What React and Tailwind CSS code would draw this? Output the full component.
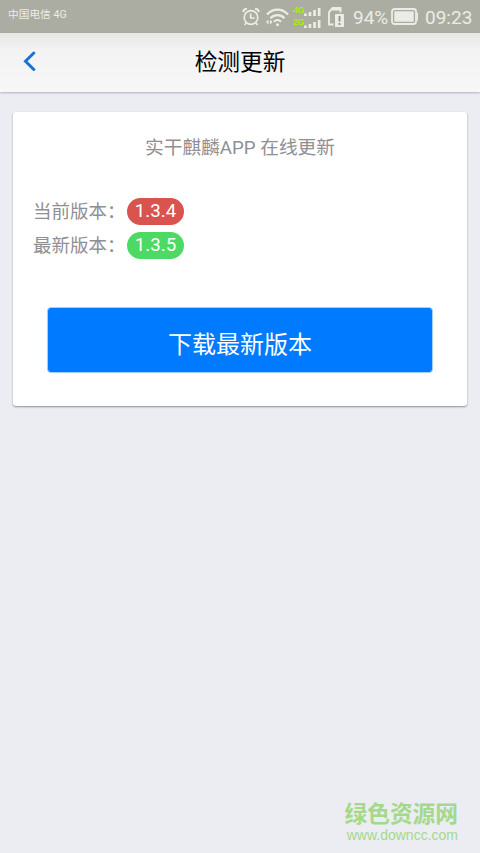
import React from "react";

function AlarmIcon() {
  return (
    <svg width="18" height="20" viewBox="0 0 18 20" fill="none" stroke="#ecece6" strokeWidth="1.700">
      <circle cx="9" cy="10.500" r="6.800" />
      <path d="M8.700 6.500v4.500h4" />
      <path d="M1.200 5c.3-2 1.800-3.300 3.800-3.300M16.800 5c-.3-2-1.800-3.300-3.800-3.300" strokeWidth="2" />
      <path d="M4 16l-1.500 2M14 16l1.500 2" />
    </svg>
  );
}

function WifiIcon() {
  return (
    <svg width="24" height="20" viewBox="0 0 24 20" fill="none" stroke="#ecece6" strokeWidth="2.200">
      <path d="M2 7.500C8 1 17 1 23 7.500" />
      <path d="M5.500 11.200c4-4 10-4 14 0" />
      <path d="M9 14.700c2-2 5-2 7 0" />
      <circle cx="12.500" cy="17.800" r="1.500" fill="#ecece6" stroke="none" />
      <path d="M3.500 12.500v5l-2.500-2.500zM5 12.500v5l2.500-2.500z" fill="#ecece6" stroke="none" />
    </svg>
  );
}

function SignalBars() {
  return (
    <svg width="17" height="8" viewBox="0 0 17 8" fill="#ecece6">
      <rect x="0" y="5.500" width="2.700" height="2.500" />
      <rect x="4.600" y="4" width="2.700" height="4" />
      <rect x="9.200" y="2" width="2.700" height="6" />
      <rect x="13.800" y="0" width="2.700" height="8" />
    </svg>
  );
}

function SimIcon() {
  return (
    <svg width="18" height="22" viewBox="0 0 18 22">
      <path d="M6.500 18.500H2V6l3.500-4H13.500v4.500" fill="none" stroke="#ecece6" strokeWidth="1.900" />
      <path d="M5 2h8.500v2.500H5z" fill="#ecece6" />
      <rect x="8" y="8" width="9" height="13" rx=".5" fill="#ecece6" />
      <path d="M12.500 10v5.500M12.500 17v2" stroke="#8f9187" strokeWidth="1.800" />
    </svg>
  );
}

function BatteryIcon() {
  return (
    <svg width="28" height="18" viewBox="0 0 28 18">
      <rect x="1" y="1" width="24" height="15" rx="2.500" fill="none" stroke="#ecece6" strokeWidth="1.800" />
      <rect x="3.300" y="3.300" width="19.400" height="10.400" fill="#ecece6" />
      <path d="M25.500 4.500H27v8h-1.500z" fill="#ecece6" />
    </svg>
  );
}

function SignalRow({ label }) {
  return (
    <div className="flex h-[10px] w-[28px] items-end">
      <span className="w-[11px] shrink-0 self-start font-['Liberation_Sans',sans-serif] text-[9px] font-bold leading-[8px] tracking-[-0.5px]">
        {label}
      </span>
      <SignalBars />
    </div>
  );
}

function StatusBar() {
  return (
    <div className="flex h-[33px] shrink-0 items-start bg-[#abada3] text-[#ecece6]">
      <span className="ml-2 mt-[7px] text-[10.700px] leading-4">中国电信 4G</span>
      <div className="ml-auto flex h-[33px] items-center pr-2">
        <AlarmIcon />
        <div className="ml-[5px] flex">
          <WifiIcon />
        </div>
        <div className="ml-1 flex flex-col gap-[2px] text-[#a9ea12]">
          <SignalRow label="4G" />
          <SignalRow label="2G" />
        </div>
        <div className="ml-1.5 flex">
          <SimIcon />
        </div>
        <span className="ml-2 w-[36px] whitespace-nowrap pt-0.5 text-[19px] leading-6">94%</span>
        <div className="ml-0.5 flex">
          <BatteryIcon />
        </div>
        <span className="ml-[6px] w-[47px] whitespace-nowrap pt-0.5 text-[19px] leading-6">09:23</span>
      </div>
    </div>
  );
}

function VersionRow({ label, version, color }) {
  return (
    <div className="flex h-[27px] items-center">
      <span className="w-[94px] whitespace-nowrap pt-0.5 text-[18.500px] leading-[27px]">{label}</span>
      <span
        className={`flex h-[27px] w-[57px] items-center justify-center rounded-full text-[18.700px] leading-[27px] text-white ${color}`}
      >
        {version}
      </span>
    </div>
  );
}

export default function App() {
  return (
    <div className="flex h-[853px] w-[480px] flex-col overflow-hidden bg-[#ecedf2] font-[Roboto,'Noto_Sans_CJK_SC',sans-serif]">
      <StatusBar />

      {/* Title bar */}
      <header className="z-10 grid h-[59px] shrink-0 grid-cols-[60px_1fr_60px] items-center bg-linear-to-b from-[#e6e6e6] via-[#f3f3f3] via-30% to-[#f7f7f7] shadow-[0_1px_2px_rgba(0,0,0,0.25)]">
        <button className="mb-[3px] flex pl-[22px]" aria-label="返回">
          <svg width="14" height="20" viewBox="0 0 14 20" fill="none" stroke="#1873d3" strokeWidth="3">
            <path d="M11.800 2L3.500 10.300l8.300 8.200" strokeLinecap="round" />
          </svg>
        </button>
        <h1 className="text-center text-[22.700px] leading-8 text-black">检测更新</h1>
      </header>

      {/* Update card */}
      <main className="mx-[13px] mt-5 flex h-[294px] flex-col rounded-[3px] bg-white text-[#8f8f94] shadow-[0_1px_2px_rgba(0,0,0,0.4)]">
        <p className="mt-[22px] text-center text-[18.700px] leading-7">实干麒麟APP 在线更新</p>
        <div className="ml-[20px] mt-[36px] flex flex-col gap-[7px]">
          <VersionRow label="当前版本：" version="1.3.4" color="bg-[#d9534f]" />
          <VersionRow label="最新版本：" version="1.3.5" color="bg-[#4cd964]" />
        </div>
        <button className="mx-[34px] mt-12 h-[66px] rounded-[4px] border border-[#9fceff] bg-[#007aff] pt-[9px] text-2xl text-white">
          下载最新版本
        </button>
      </main>

      {/* Site mark */}
      <footer className="mb-[10px] mr-[22px] mt-auto flex flex-col items-end text-[#a4d98c]">
        <span className="text-[22.700px] font-bold leading-6">绿色资源网</span>
        <span className="font-['Liberation_Sans',sans-serif] text-[14px] leading-4">www.downcc.com</span>
      </footer>
    </div>
  );
}
